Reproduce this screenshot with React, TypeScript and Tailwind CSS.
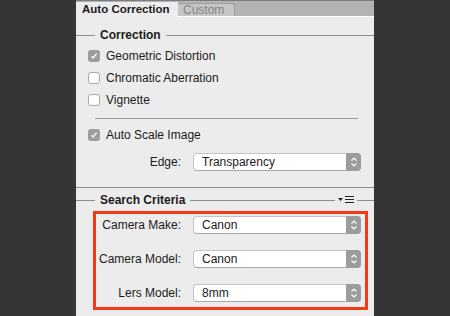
import React from "react";

function Check({ checked }: { checked?: boolean }) {
  if (checked) {
    return (
      <div className="w-[12px] h-[12px] rounded-[3px] bg-[#9d9d9d] flex items-center justify-center">
        <svg width="8" height="8" viewBox="0 0 8 8">
          <path d="M1.5 4.2 L3.2 6 L6.6 1.6" stroke="#fff" strokeWidth="1.3" fill="none" />
        </svg>
      </div>
    );
  }
  return <div className="w-[12px] h-[12px] rounded-[3px] bg-white border border-[#a9a9a9]" />;
}

function CheckRow({ label, checked }: { label: string; checked?: boolean }) {
  return (
    <div className="h-[22px] flex items-center pl-[12px] gap-[6px]">
      <Check checked={checked} />
      <span>{label}</span>
    </div>
  );
}

function Select({ value }: { value: string }) {
  return (
    <div className="h-[18px] w-[168px] flex bg-white border border-[#c4c4c4] border-b-[#a8a8a8] rounded-[4px]">
      <div className="flex-1 pl-[8px] leading-[16px]">{value}</div>
      <div className="w-[15px] -my-px -mr-px bg-[#9c9c9c] rounded-r-[4px] flex items-center justify-center">
        <svg width="8" height="12" viewBox="0 0 8 12">
          <path d="M1.5 4.5 L4 2 L6.5 4.5 M1.5 7.5 L4 10 L6.5 7.5" stroke="#fff" strokeWidth="1.2" fill="none" />
        </svg>
      </div>
    </div>
  );
}

function GroupHeader({ title, children }: { title: string; children?: React.ReactNode }) {
  return (
    <div className="h-[14px] flex items-center">
      <div className="w-[19px] h-px bg-[#8f8f8f]" />
      <span className="px-[5px] font-bold">{title}</span>
      <div className="flex-1 h-px bg-[#8f8f8f]" />
      {children}
    </div>
  );
}

export default function App() {
  return (
    <div className="w-[450px] h-[316px] bg-[#353535] flex overflow-hidden text-[12px] text-[#1b1b1b] font-['Liberation_Sans',Arial,sans-serif]">
      <div className="ml-[76px] w-[298px] bg-[#ececec] flex flex-col">
        <div className="h-[17px] bg-[#b3b3b3] border-t border-[#7d7d7d] border-b border-b-white flex items-end">
          <div className="w-[102px] h-[15px] -mb-px bg-[#ececec] pl-[6px] font-bold leading-[15px] text-[11.5px]">
            Auto Correction
          </div>
          <div className="w-[57px] h-[13px] bg-[#c6c6c6] border-r border-t border-[#a0a0a0] rounded-tr-[3px] pl-[5px] text-[#858585] leading-[13px]">
            Custom
          </div>
        </div>

        <div className="mt-[11px]">
          <GroupHeader title="Correction" />
        </div>
        <div className="mt-[3px]">
          <CheckRow label="Geometric Distortion" checked />
          <CheckRow label="Chromatic Aberration" />
          <CheckRow label="Vignette" />
        </div>
        <div className="ml-[19px] w-[263px] h-px bg-[#9a9a9a] mt-[7px]" />
        <div className="mt-[5px]">
          <CheckRow label="Auto Scale Image" checked />
        </div>
        <div className="mt-[7px] flex items-center gap-[12px]">
          <div className="w-[105px] text-right">Edge:</div>
          <Select value="Transparency" />
        </div>
        <div className="h-px bg-[#8f8f8f] mt-[16px]" />

        <div className="mt-[5px]">
          <GroupHeader title="Search Criteria">
            <svg width="18" height="10" viewBox="0 0 18 10" className="mx-[2px]">
              <path d="M1 3 L6 3 L3.5 6 Z" fill="#222" />
              <path d="M8 1.5 H17 M8 4.5 H17 M8 7.5 H17" stroke="#222" strokeWidth="1.2" />
            </svg>
            <div className="w-[17px] h-px bg-[#8f8f8f]" />
          </GroupHeader>
        </div>

        <div className="mt-[4px] ml-[17px] w-[275px] border-[3px] border-[#f23b16] pt-[2px] pb-[5px] flex flex-col gap-[16px]">
          {[
            ["Camera Make:", "Canon"],
            ["Camera Model:", "Canon"],
            ["Lers Model:", "8mm"],
          ].map(([label, value]) => (
            <div key={label} className="flex items-center gap-[12px]">
              <div className="w-[85px] text-right">{label}</div>
              <Select value={value} />
            </div>
          ))}
        </div>
      </div>
    </div>
  );
}
